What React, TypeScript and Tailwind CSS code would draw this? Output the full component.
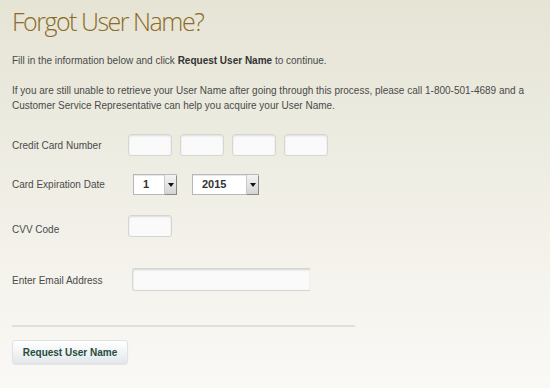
import React from "react";

function Box({ w = "w-[44px]" }: { w?: string }) {
  return (
    <div
      className={`${w} h-[22px] rounded-[3px] border border-[#d6d6d0] bg-[#fafafa] shadow-[inset_0_1px_2px_rgba(0,0,0,0.12)]`}
    />
  );
}

function Select({ value, w }: { value: string; w: string }) {
  return (
    <div className={`${w} h-[21px] flex border border-[#b8b8b8] bg-white shadow-[inset_0_1px_1px_rgba(0,0,0,0.1)]`}>
      <div className="flex-1 flex items-center pl-[9px] text-[11px] font-bold text-[#333]">{value}</div>
      <div className="w-[12px] h-full flex items-center justify-center bg-gradient-to-b from-[#f4f4f4] to-[#d4d4d4] border-l border-[#c8c8c8] shadow-[1px_1px_0_#888]">
        <svg width="6" height="4" viewBox="0 0 6 4">
          <path d="M0 0 L6 0 L3 4 Z" fill="#111" />
        </svg>
      </div>
    </div>
  );
}

export default function App() {
  return (
    <div
      className="w-[550px] h-[388px] overflow-hidden bg-gradient-to-b from-[#e5e4d5] to-[#fbf9f6] text-[#4a4a4a]"
      style={{ fontFamily: '"Liberation Sans", Arial, sans-serif' }}
    >
      <div className="pl-[12px] pt-[5px]">
        <h1
          className="text-[25px] leading-[32px] font-light tracking-[-1.5px] text-[#8b6b25]"
          style={{ fontFamily: '"Open Sans", sans-serif' }}
        >
          Forgot User Name?
        </h1>
        <p className="mt-[16px] text-[10px] leading-[15px]">
          Fill in the information below and click <b className="text-[#333]">Request User Name</b> to continue.
        </p>
        <p className="mt-[15px] text-[10px] leading-[15px] w-[530px]">
          If you are still unable to retrieve your User Name after going through this process, please call 1-800-501-4689 and a
          <br />
          Customer Service Representative can help you acquire your User Name.
        </p>

        <div className="mt-[21px] flex items-center h-[22px]">
          <div className="w-[116px] text-[10px]">Credit Card Number</div>
          <div className="flex gap-[8px]">
            <Box />
            <Box />
            <Box />
            <Box />
          </div>
        </div>

        <div className="mt-[18px] flex items-center h-[21px]">
          <div className="w-[121px] text-[10px]">Card Expiration Date</div>
          <div className="flex gap-[15px]">
            <Select value="1" w="w-[44px]" />
            <Select value="2015" w="w-[67px]" />
          </div>
        </div>

        <div className="mt-[19px] flex items-center h-[23px]">
          <div className="w-[116px] text-[10px] pt-[8px]">CVV Code</div>
          <Box />
        </div>

        <div className="mt-[31px] flex items-center h-[23px]">
          <div className="w-[120px] text-[10px] pt-[2px]">Enter Email Address</div>
          <div className="w-[178px] h-[23px] rounded-l-[3px] border border-r-0 border-[#d6d6d0] bg-[#fafafa] shadow-[inset_0_1px_2px_rgba(0,0,0,0.15)]" />
        </div>

        <div className="mt-[34px] w-[343px] h-[2px] bg-[#e2e0d4]" />

        <button className="mt-[13px] w-[116px] h-[24px] rounded-[3px] border border-[#e0e2e4] bg-gradient-to-b from-white to-[#e4e8ec] text-[10px] font-bold text-[#1f4d3e] shadow-[0_1px_1px_rgba(0,0,0,0.08)]">
          Request User Name
        </button>
      </div>
    </div>
  );
}
